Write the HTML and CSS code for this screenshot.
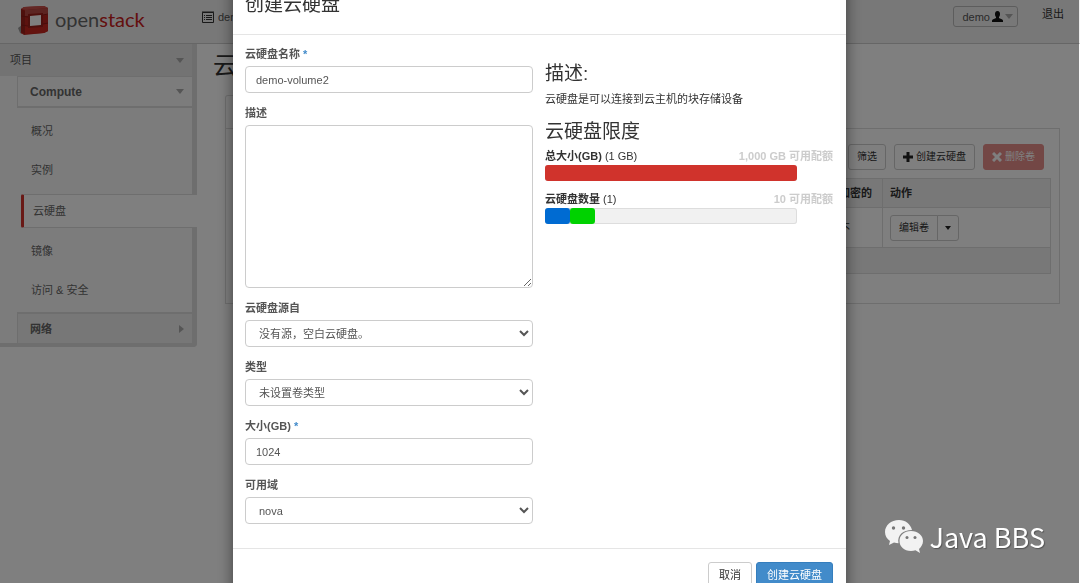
FILE: index.html
```html
<!DOCTYPE html>
<html lang="zh-CN">
<head>
    <meta charset="UTF-8">
    <meta name="viewport" content="width=device-width, initial-scale=1.0">
    <title>云硬盘 - OpenStack</title>
    <link rel="stylesheet" href="styles.css">
</head>
<body>
    <header class="topbar">
        <a class="brand" href="#">
            <svg class="brand-cube" width="32" height="32" viewBox="0 0 32 32">
                <path d="M0 24l4-3v9l-2-1z" fill="#999"/>
                <path d="M3 5l3-2 20-1 4 2v23l-4 2-20 2-3-2z" fill="#b8241e"/>
                <path d="M3 5l3-2 20-1 4 2-22 2z" fill="#c9514b"/>
                <path d="M3 5l4 2v23l-4-2z" fill="#9c201b"/>
                <path d="M7 6l23-2v7l-23 1z" fill="#b94a45"/>
                <path d="M7 21l23-1v7l-4 2-19 1z" fill="#c9271f"/>
                <path d="M10 10l15-1v14l-15 1z" fill="#9c201b"/>
                <path d="M12 12l11-1v10l-11 1z" fill="#fff"/>
                <path d="M3 12l7 1M3 21l7 1M25 11l5-1M25 20l5-1" stroke="#8d1a16" fill="none"/>
            </svg>
            <span class="brand-name">open<b>stack</b></span>
        </a>
        <a class="project-picker" href="#">
            <svg width="12" height="12" viewBox="0 0 12 12" fill="none" stroke="#333">
                <path d="M.5 1.5h11v10H.5zM0 1h12M2 4.500h1M4 4.500h6M2 6.500h1M4 6.500h6M2 8.500h1M4 8.500h6"/>
            </svg>
            demo
        </a>
        <div class="topbar-right">
            <button class="user-btn" type="button">
                demo
                <svg width="11" height="11" viewBox="0 0 11 11"><path d="M5.500 0C7.500 0 8 1.500 8 3S7.500 5.500 7 6v1c1 1 3.500 1 4 2.500V11H0V9.500C.5 8 3 8 4 7V6C3.500 5.500 3 4.500 3 3S3.500 0 5.500 0z" fill="#111"/></svg>
                <span class="arrow-down"></span>
            </button>
            <a class="logout" href="#">退出</a>
        </div>
    </header>

    <div class="layout">
        <nav class="sidebar">
            <a class="nav-dashboard" href="#">项目 <span class="arrow-down"></span></a>
            <div class="nav-groups">
                <a class="nav-group" href="#">Compute <span class="arrow-down"></span></a>
                <ul class="nav-panels">
                    <li><a href="#">概况</a></li>
                    <li><a href="#">实例</a></li>
                    <li><a class="active" href="#">云硬盘</a></li>
                    <li><a href="#">镜像</a></li>
                    <li><a href="#">访问 &amp; 安全</a></li>
                </ul>
                <a class="nav-group closed" href="#">网络 <span class="arrow-right"></span></a>
            </div>
        </nav>

        <main class="content">
            <h1>云硬盘</h1>
            <div class="tab"></div>
            <section class="panel">
                <div class="toolbar">
                    <button class="btn" type="button">筛选</button>
                    <button class="btn" type="button">
                        <svg width="10" height="10" viewBox="0 0 10 10"><path d="M5 0v10M0 5h10" stroke="#222" stroke-width="3"/></svg>
                        创建云硬盘
                    </button>
                    <button class="btn btn-danger" type="button">
                        <svg width="10" height="10" viewBox="0 0 10 10"><path d="M1 1l8 8M9 1L1 9" stroke="#fff" stroke-width="3"/></svg>
                        删除卷
                    </button>
                </div>
                <table class="volumes">
                    <thead>
                        <tr><th></th><th class="col-encrypted">加密的</th><th class="col-actions">动作</th></tr>
                    </thead>
                    <tbody>
                        <tr>
                            <td></td>
                            <td>不</td>
                            <td>
                                <div class="btn-group">
                                    <button class="btn" type="button">编辑卷</button>
                                    <button class="btn btn-caret" type="button" aria-label="更多"><span class="caret"></span></button>
                                </div>
                            </td>
                        </tr>
                    </tbody>
                    <tfoot>
                        <tr><td colspan="3"></td></tr>
                    </tfoot>
                </table>
            </section>
        </main>
    </div>

    <div class="backdrop">
        <form class="modal" role="dialog" aria-labelledby="modal-title">
            <div class="modal-header">
                <h2 id="modal-title">创建云硬盘</h2>
            </div>
            <div class="modal-body">
                <div class="fields">
                    <div class="field">
                        <label for="name">云硬盘名称 <span class="required">*</span></label>
                        <input id="name" type="text" value="demo-volume2">
                    </div>
                    <div class="field">
                        <label for="description">描述</label>
                        <textarea id="description"></textarea>
                    </div>
                    <div class="field">
                        <label for="source">云硬盘源自</label>
                        <select id="source"><option>没有源，空白云硬盘。</option></select>
                    </div>
                    <div class="field">
                        <label for="type">类型</label>
                        <select id="type"><option>未设置卷类型</option></select>
                    </div>
                    <div class="field">
                        <label for="size">大小(GB) <span class="required">*</span></label>
                        <input id="size" type="text" value="1024">
                    </div>
                    <div class="field">
                        <label for="zone">可用域</label>
                        <select id="zone"><option>nova</option></select>
                    </div>
                </div>
                <div class="help">
                    <h3>描述:</h3>
                    <p>云硬盘是可以连接到云主机的块存储设备</p>
                    <h3>云硬盘限度</h3>
                    <div class="quota">
                        <div class="quota-title">
                            <span><strong>总大小(GB)</strong> (1 GB)</span>
                            <span class="quota-left">1,000 GB 可用配额</span>
                        </div>
                        <div class="bar"><div class="bar-over" style="width: 100%"></div></div>
                    </div>
                    <div class="quota">
                        <div class="quota-title">
                            <span><strong>云硬盘数量</strong> (1)</span>
                            <span class="quota-left">10 可用配额</span>
                        </div>
                        <div class="bar">
                            <div class="bar-used" style="width: 10%"></div>
                            <div class="bar-new" style="width: 10%"></div>
                        </div>
                    </div>
                </div>
            </div>
            <div class="modal-footer">
                <button class="btn" type="button">取消</button>
                <button class="btn btn-primary" type="submit">创建云硬盘</button>
            </div>
        </form>
    </div>

    <div class="watermark">
        <svg width="38" height="34" viewBox="0 0 38 34">
            <path d="M14 0C6 0 0 5.500 0 12c0 4 2 7 5 9l-1 4 5-2.500c1.500 .5 3 .7 4.500 .7C12 15 18 10 27 10 25.500 4 20.500 0 14 0z" fill="#f2f2f2"/>
            <path d="M26 11c-7 0-11.500 4.500-11.500 10s4.500 10 11.500 10c1.500 0 3-.3 4.500-.7L35 33l-1-4c2-2 4-4.500 4-8 0-5.500-5-10-12-10z" fill="#f2f2f2"/>
            <g fill="#777"><circle cx="8.500" cy="8" r="1.700"/><circle cx="18.500" cy="8" r="1.700"/><circle cx="22" cy="17.500" r="1.500"/><circle cx="30" cy="17.500" r="1.500"/></g>
        </svg>
        <span>Java BBS</span>
    </div>
</body>
</html>
```
FILE: styles.css
```css
* {
    box-sizing: border-box;
}
body {
    margin: 0;
    background: #fff;
    color: #333;
    font-family: "Liberation Sans", "Noto Sans CJK SC", sans-serif;
    font-size: 11px;
    line-height: 16px;
    height: 100vh;
    overflow: hidden;
}
a {
    color: inherit;
    text-decoration: none;
}
h1, h2, h3, p, ul {
    margin: 0;
    padding: 0;
    font-weight: normal;
}
button, input, textarea, select {
    font: inherit;
    color: #555;
}

/* top bar */
.topbar {
    display: flex;
    align-items: flex-start;
    height: 44px;
    padding-left: 18px;
    background: #f1f1f1;
    border-bottom: 1px solid #ccc;
}
.brand {
    display: flex;
    gap: 5px;
    width: 184px;
    padding-top: 4px;
}
.brand-name {
    font-family: Lato, sans-serif;
    font-size: 20px;
    line-height: 30px;
    color: #666;
}
.brand-name b {
    font-weight: normal;
    color: #c8201c;
}
.project-picker {
    display: flex;
    align-items: center;
    gap: 4px;
    padding-top: 9px;
    color: #555;
}
.topbar-right {
    display: flex;
    gap: 24px;
    margin-left: auto;
    padding: 6px 16px 0 0;
}
.user-btn {
    display: flex;
    align-items: center;
    gap: 2px;
    height: 21px;
    padding: 0 4px 0 8px;
    background: transparent;
    border: 1px solid #bbb;
    border-radius: 3px;
}
.arrow-down {
    border: 4px solid transparent;
    border-top: 5px solid #aaa;
    border-bottom: 0;
}
.arrow-right {
    border: 4px solid transparent;
    border-left: 5px solid #aaa;
    border-right: 0;
}

/* sidebar */
.layout {
    display: flex;
    align-items: flex-start;
}
.sidebar {
    flex: none;
    width: 197px;
    background: #f9f9f9;
    border-right: 5px solid #ddd;
    border-bottom: 4px solid #ddd;
    border-radius: 0 0 4px 0;
}
.nav-dashboard, .nav-group {
    display: flex;
    align-items: center;
    justify-content: space-between;
    height: 32px;
}
.nav-dashboard {
    padding: 0 8px 0 10px;
    background: #e6e6e6;
    color: #555;
}
.nav-groups {
    margin-left: 17px;
}
.nav-group {
    padding: 0 8px 0 12px;
    border: 2px solid #ddd;
    border-width: 1px 0 2px 1px;
    font-size: 12px;
    font-weight: bold;
    color: #666;
}
.nav-group.closed {
    height: 31px;
    background: #eee;
    border-width: 2px 0 0 1px;
    font-size: 11px;
}
.nav-panels {
    list-style: none;
    padding: 4px 0 2px;
}
.nav-panels a {
    display: block;
    padding: 11px 14px 12px;
    color: #666;
}
.nav-panels .active {
    margin: 4px -5px 4px 4px;
    padding: 8px 9px;
    background: #fff;
    border: 1px solid #ddd;
    border-left: 3px solid #d2322d;
    border-right: 0;
    border-radius: 2px 0 0 2px;
}

/* page */
.content {
    flex: 1;
    padding: 8px 20px 0 16px;
}
.content h1 {
    font-size: 24px;
    line-height: 28px;
}
.tab {
    height: 33px;
    width: 90px;
    margin: 15px 0 0 12px;
    border: 1px solid #ddd;
    border-bottom: 0;
    border-radius: 3px 3px 0 0;
}
.panel {
    margin-left: 12px;
    padding: 15px 8px 29px;
    border: 1px solid #ddd;
}
.toolbar {
    display: flex;
    justify-content: flex-end;
    gap: 8px;
    padding: 0 7px 8px 0;
}
.btn {
    display: flex;
    align-items: center;
    gap: 3px;
    height: 26px;
    padding: 0 8px;
    background: #fff;
    border: 1px solid #ccc;
    border-radius: 3px;
    font-size: 10px;
    color: #333;
}
.btn-danger {
    background: #e68e8b;
    border-color: #e68e8b;
    color: #fff;
}
.btn-primary {
    background: #428bca;
    border-color: #357ebd;
    color: #fff;
}
.btn-group {
    display: flex;
}
.btn-group .btn:first-child {
    border-radius: 3px 0 0 3px;
}
.btn-group .btn-caret {
    margin-left: -1px;
    padding: 0 7px;
    border-radius: 0 3px 3px 0;
}
.caret {
    border: 3px solid transparent;
    border-top: 4px solid #222;
    border-bottom: 0;
}
.volumes {
    width: 100%;
    border-collapse: collapse;
    table-layout: fixed;
    border: 1px solid #ddd;
}
.volumes th, .volumes td {
    padding: 6px 7px;
    border: 1px solid #ddd;
    text-align: left;
}
.volumes th {
    background: #f1f1f1;
    font-size: 11px;
}
.volumes td {
    height: 40px;
}
.volumes tfoot td {
    height: 26px;
    background: #f1f1f1;
}
.col-encrypted {
    width: 51px;
}
.col-actions {
    width: 168px;
}

/* modal */
.backdrop {
    position: fixed;
    inset: 0 1px 0 0;
    overflow: hidden;
    background: rgba(0, 0, 0, 0.5);
}
.modal {
    width: 613px;
    max-width: 100%;
    margin: -20px auto 0;
    background: #fff;
    box-shadow: 0 4px 14px rgba(0, 0, 0, 0.5);
}
.modal-header {
    padding: 14px 12px 18px;
    border-bottom: 1px solid #e5e5e5;
}
.modal-header h2 {
    font-size: 19px;
    line-height: 22px;
}
.modal-body {
    display: flex;
    gap: 12px;
    padding: 11px 13px 24px 12px;
}
.fields, .help {
    flex: 1;
}
.field {
    margin-bottom: 12px;
}
.field:last-child {
    margin-bottom: 0;
}
.field label {
    display: block;
    margin-bottom: 4px;
    font-weight: bold;
    color: #555;
}
.required {
    color: #428bca;
}
.field input, .field select, .field textarea {
    display: block;
    width: 100%;
    height: 27px;
    padding: 0 10px;
    background: #fff;
    border: 1px solid #ccc;
    border-radius: 4px;
}
.field select {
    padding: 0 4px 0 9px;
}
.field textarea {
    height: 163px;
    resize: vertical;
}
.help {
    padding-top: 16px;
}
.help h3 {
    font-size: 19px;
    line-height: 24px;
}
.help p {
    margin: 5px 0 13px;
}
.quota {
    margin-bottom: 9px;
}
.help h3 + .quota {
    margin-top: 3px;
}
.quota-title {
    display: flex;
    justify-content: space-between;
    line-height: 18px;
}
.quota-left {
    font-weight: bold;
    color: #ccc;
}
.bar {
    display: flex;
    width: 252px;
    height: 16px;
    background: #f1f1f1;
    border-radius: 3px;
    box-shadow: inset 0 0 0 1px #ddd;
}
.bar div {
    border-radius: 3px;
}
.bar-over {
    background: #d0332c;
}
.bar-used {
    background: #006bd2;
}
.bar-new {
    background: #00d200;
}
.modal-footer {
    display: flex;
    justify-content: flex-end;
    gap: 4px;
    padding: 13px;
    border-top: 1px solid #e5e5e5;
}
.modal-footer .btn {
    padding: 0 10px;
    font-size: 11px;
}

.watermark {
    position: fixed;
    right: 35px;
    bottom: 28px;
    display: flex;
    align-items: center;
    gap: 6px;
    color: #fff;
    font-family: "Noto Sans CJK SC", sans-serif;
    font-size: 27px;
    line-height: 36px;
    text-shadow: 1px 1px 1px #555;
}
```
